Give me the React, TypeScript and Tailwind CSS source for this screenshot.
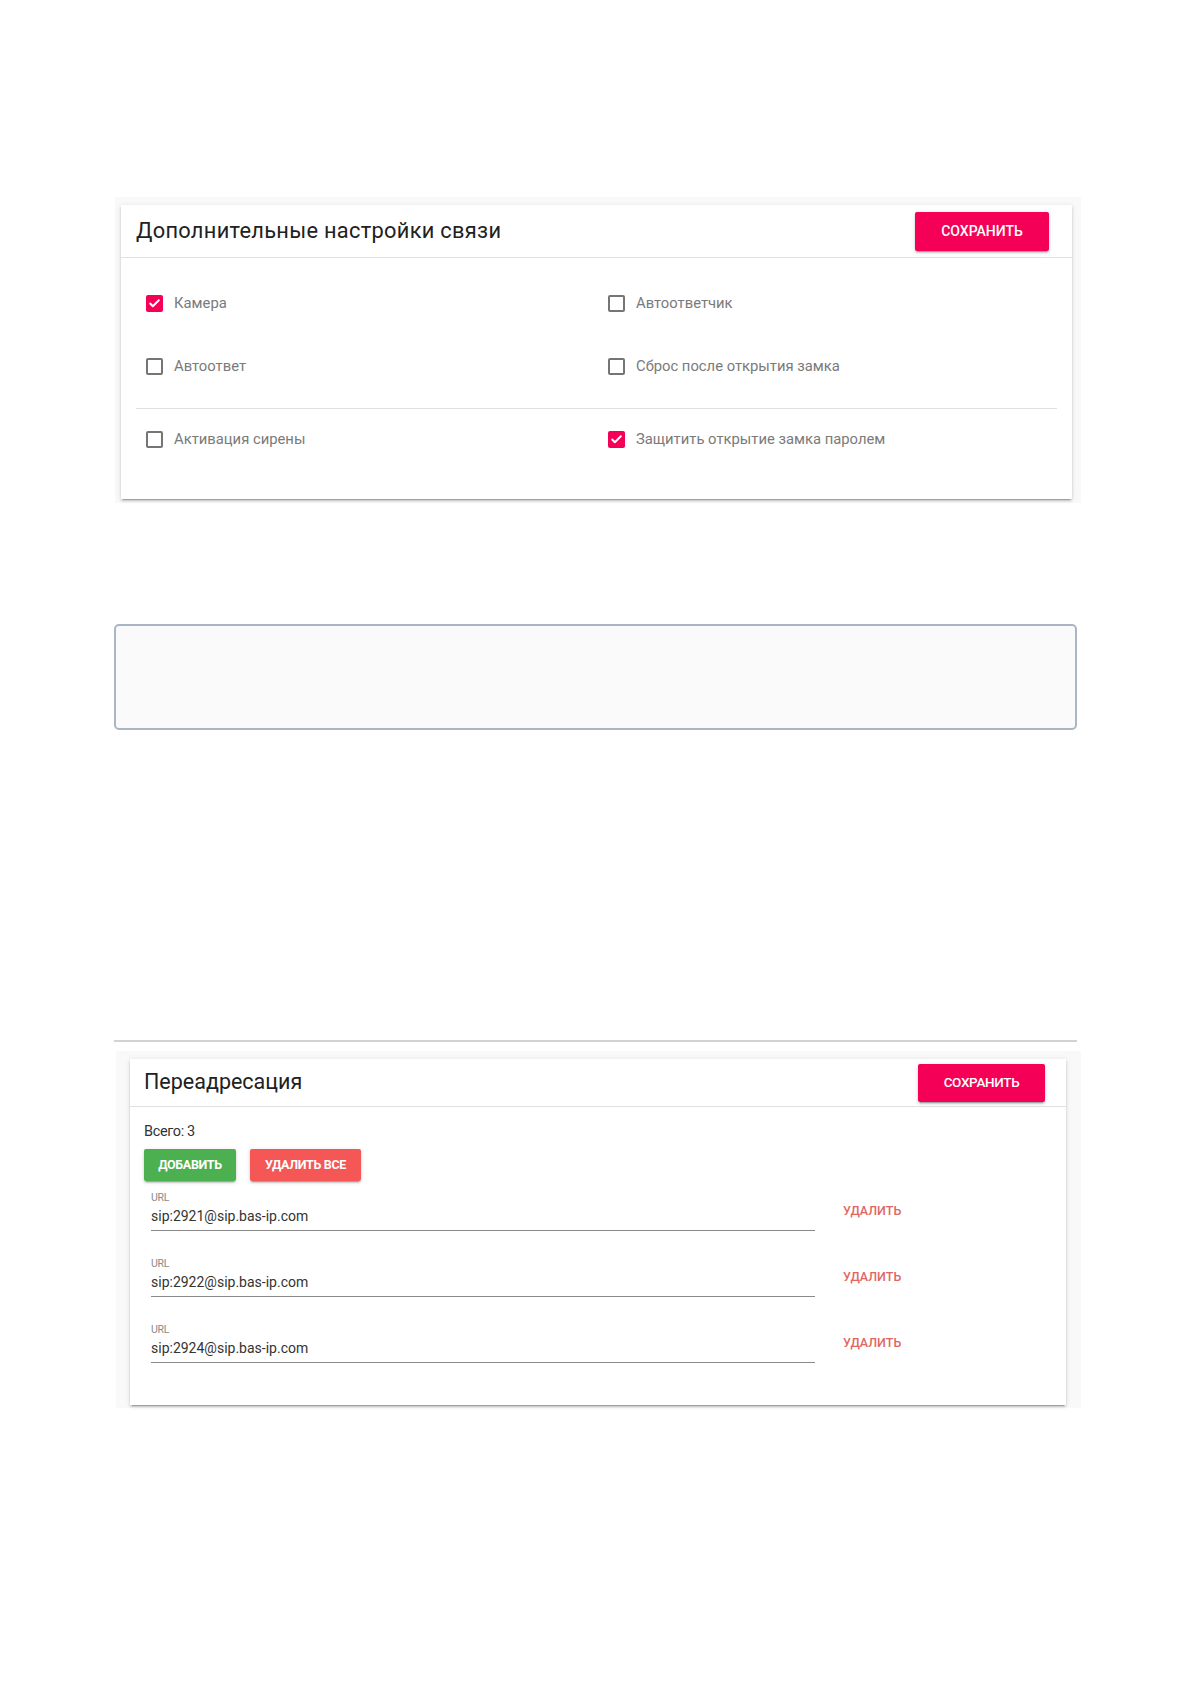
import { Check } from "lucide-react";

const font = { fontFamily: "Roboto, 'Liberation Sans', sans-serif" };

function Box({ checked, label }: { checked: boolean; label: string }) {
  return (
    <div className="flex items-center h-10 gap-[11px]">
      {checked ? (
        <span className="w-[17px] h-[17px] rounded-[2px] bg-[#f50057] flex items-center justify-center">
          <Check className="w-[13px] h-[13px] text-white" strokeWidth={3.5} />
        </span>
      ) : (
        <span className="w-[17px] h-[17px] rounded-[2px] border-2 border-[#757575]" />
      )}
      <span className="text-[14.8px] text-[#7a7a7a]">{label}</span>
    </div>
  );
}

const shadow = "shadow-[0_3px_1px_-2px_rgba(0,0,0,0.2),0_2px_2px_0_rgba(0,0,0,0.14),0_1px_5px_0_rgba(0,0,0,0.12)]";

const urls = ["sip:2921@sip.bas-ip.com", "sip:2922@sip.bas-ip.com", "sip:2924@sip.bas-ip.com"];

export default function App() {
  return (
    <div className="w-[1191px] h-[1684px] overflow-hidden bg-white flex flex-col" style={font}>
      {/* Дополнительные настройки связи */}
      <div className="ml-[115px] w-[966px] mt-[197px] bg-[#f9f9f9] pt-2 pl-[6px] pr-[9px] pb-[4px]">
        <div className={`bg-white ${shadow}`}>
          <div className="flex items-center justify-between h-[53px] pl-[15px] pr-[23px] border-b border-[#e0e0e0]">
            <h2 className="text-[21.8px] text-[#212121] tracking-[0.3px]">Дополнительные настройки связи</h2>
            <button className={`w-[134px] h-[39px] rounded-[2px] bg-[#f50057] text-white text-[14px] font-medium ${shadow}`}>
              СОХРАНИТЬ
            </button>
          </div>
          <div className="px-[15px] pt-[25px] pb-[40px]">
            <div className="grid grid-cols-[462px_1fr] pl-[10px] gap-y-[23px]">
              <Box checked label="Камера" />
              <Box checked={false} label="Автоответчик" />
              <Box checked={false} label="Автоответ" />
              <Box checked={false} label="Сброс после открытия замка" />
            </div>
            <div className="h-px bg-[#e0e0e0] mt-[22px] mb-[10px]" />
            <div className="grid grid-cols-[462px_1fr] pl-[10px]">
              <Box checked={false} label="Активация сирены" />
              <Box checked label="Защитить открытие замка паролем" />
            </div>
          </div>
        </div>
      </div>

      {/* пустое поле */}
      <div className="ml-[114px] w-[963px] h-[106px] mt-[121px] border-2 border-[#aab5c6] rounded-[5px] bg-[#fafafa]" />

      <div className="ml-[114px] w-[963px] h-[2px] bg-[#d2d2d2] mt-[310px]" />

      {/* Переадресация */}
      <div className="ml-[116px] w-[965px] mt-[9px] bg-[#f9f9f9] pt-2 pl-[14px] pr-[15px] pb-[3px]">
        <div className={`bg-white ${shadow}`}>
          <div className="flex items-center justify-between h-[48px] pl-[14px] pr-[21px] border-b border-[#e0e0e0]">
            <h2 className="text-[21.5px] text-[#212121]">Переадресация</h2>
            <button className={`w-[127px] h-[38px] rounded-[2px] bg-[#f50057] text-white text-[13.5px] font-medium tracking-tight ${shadow}`}>
              СОХРАНИТЬ
            </button>
          </div>
          <div className="pl-[14px] pt-[15px] pb-[42px]">
            <div className="text-[14.5px] text-[#333] tracking-tight leading-5">Всего: 3</div>
            <div className="flex gap-[14px] mt-[7px]">
              <button className={`w-[92px] h-[32px] rounded-[2px] bg-[#4caf50] text-white text-[12.5px] font-bold tracking-tight ${shadow}`}>
                ДОБАВИТЬ
              </button>
              <button className={`w-[111px] h-[32px] rounded-[2px] bg-[#f55656] text-white text-[12.5px] font-bold tracking-tight ${shadow}`}>
                УДАЛИТЬ ВСЕ
              </button>
            </div>
            <div className="flex flex-col gap-[26px] mt-[10px] pl-[7px]">
              {urls.map((u) => (
                <div key={u} className="flex items-center">
                  <div className="w-[664px] border-b border-[#8a8a8a]">
                    <div className="text-[10.5px] text-[#8a8a8a] leading-[14px] tracking-tight">URL</div>
                    <div className="text-[14px] text-[#333] leading-[22px] pb-[3px]">{u}</div>
                  </div>
                  <span className="ml-[28px] text-[12.5px] font-medium text-[#e06666]">УДАЛИТЬ</span>
                </div>
              ))}
            </div>
          </div>
        </div>
      </div>
    </div>
  );
}
